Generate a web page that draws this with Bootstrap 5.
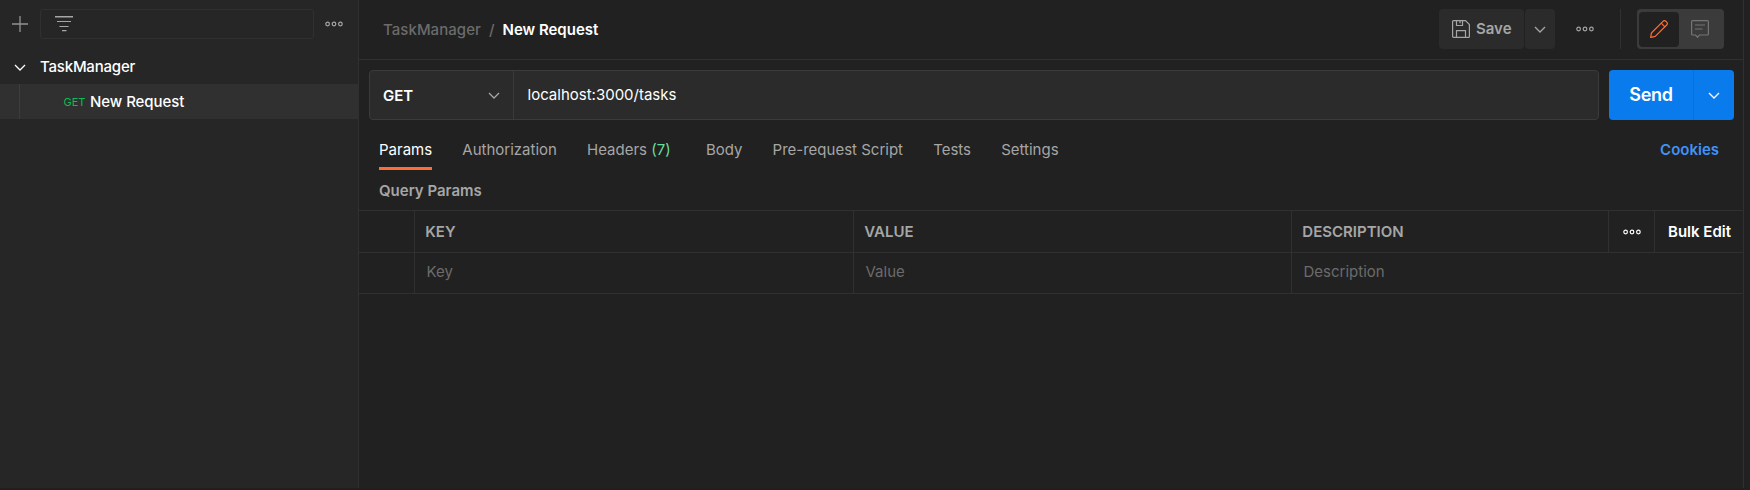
<!DOCTYPE html>
<html lang="en">
<head>
<meta charset="utf-8">
<title>TaskManager / New Request</title>
<link rel="stylesheet" href="https://cdn.jsdelivr.net/npm/bootstrap@5.3.0/dist/css/bootstrap.min.css">
<style>
  body { background: #212121; color: #fff; font-family: Inter, "Liberation Sans", sans-serif; font-size: 15px; line-height: 20px; }
  svg { display: block; flex: none; fill: none; }
  .app { height: 490px; border-bottom: 2px solid #231f20; }
  .side { width: 359px; background: #262626; border-right: 1px solid #303030; font-weight: 500; letter-spacing: -.05px; }
  .side-tools { height: 48px; padding-left: 12px; color: #a6a6a6; }
  .filter { width: 274px; height: 30px; border: 1px solid #303030; border-radius: 3px; padding-left: 14px; margin-left: 12px; margin-right: 11px; }
  .folder { height: 36px; padding-left: 14px; padding-top: 2px; letter-spacing: -.2px; }
  .folder svg { margin-right: 14px; }
  .request { height: 35px; background: #303030; }
  .guide { width: 20px; border-right: 1px solid #3d3d3d; margin-right: 43.5px; }
  .verb { font-size: 11px; font-weight: 400; color: #0cbb52; width: 26.5px; }
  .work { width: 1385px; border-right: 1px solid #303030; }
  .topbar { height: 60px; border-bottom: 1px solid #303030; padding: 0 19px 1px 24px; }
  .trail { padding-top: 2px; }
  .crumb { color: #6b6b6b; font-weight: 500; letter-spacing: .05px; }
  .soft { background: #2b2b2b; color: #a6a6a6; height: 40px; font-weight: 600; border-radius: 4px; }
  .save { width: 85px; padding-left: 13px; margin-right: 1px; }
  .save svg { margin-right: 6px; }
  .caret { width: 30px; }
  .more { margin-left: 21px; color: #a6a6a6; }
  .rule { width: 1px; height: 40px; background: #303030; margin-left: 26px; margin-right: 16px; }
  .modes { width: 87px; height: 40px; background: #3b3b3b; border-radius: 4px; padding: 2px; }
  .mode { width: 40px; height: 35px; border-radius: 4px; }
  .mode.on { background: #212121; margin-right: 1px; }
  .urlrow { padding: 10px 9px 0 10px; }
  .urlbox { width: 1230px; height: 50px; background: #2b2b2b; border: 1px solid #3b3b3b; border-radius: 4px; margin-right: 10px; }
  .method { width: 144px; border-right: 1px solid #3b3b3b; padding: 1px 13px 0; font-weight: 600; }
  .method svg { color: #a6a6a6; }
  .address { padding-left: 13.5px; }
  .send { width: 125px; height: 50px; background: #097bed; border-radius: 4px; font-weight: 600; font-size: 18px; letter-spacing: -.3px; }
  .send-main { width: 85px; border-right: 1px solid #1070d0; }
  .tabs { height: 50px; padding: 0 24px 0 20px; color: #a6a6a6; margin-bottom: 10px; }
  .tab { height: 50px; padding-top: 20px; margin-right: 30.15px; white-space: nowrap; }
  .tab.on { color: #fff; border-bottom: 3px solid #ff6c37; }
  .tab.counted { margin-right: 35.3px; }
  .counted span { color: #6bdd9a; }
  .tabs .cookies { color: #4093f6; font-weight: 600; margin-left: auto; padding-top: 20px; }
  .subtitle { color: #a6a6a6; font-weight: 600; padding-left: 20px; height: 30px; padding-top: 1px; }
  .params { display: grid; grid-template-columns: 55px 439px 438px 317px 46px 1fr; border-top: 1px solid #303030; }
  .params > div { border-bottom: 1px solid #303030; height: 42px; padding-left: 10.3px; display: flex; align-items: center; }
  .params > .edge { border-left: 1px solid #303030; }
  .params > .th { color: #a6a6a6; font-weight: 600; }
  .params > .act { color: #fff; padding-left: 13px; }
  .params > .act.opts { padding-left: 14px; }
  .params > .td { height: 41px; color: #6b6b6b; padding-left: 11.5px; padding-bottom: 2px; }
  .params > .span3 { grid-column: span 3; }
</style>
</head>
<body>
<svg width="0" height="0" class="position-absolute">
  <defs>
    <g id="dots" stroke="currentColor" stroke-width="1.2"><circle cx="2.6" cy="3" r="1.8"/><circle cx="9" cy="3" r="1.8"/><circle cx="15.4" cy="3" r="1.8"/></g>
    <path id="chev" d="M1 1l5 5 5-5" stroke="currentColor" stroke-width="1.3"/>
  </defs>
</svg>
<div class="app d-flex">
  <aside class="side">
    <div class="side-tools d-flex align-items-center">
      <svg width="16" height="16" stroke="#929292" stroke-width="1.3"><path d="M8 0v16M0 8h16"/></svg>
      <div class="filter d-flex align-items-center">
        <svg width="18" height="16"><path fill="#a6a6a6" d="M0 0h18v1.500H0zM2 5h14v1H2zM4.500 10h9v1h-9zM7 14h4.500v1.300H7z"/></svg>
      </div>
      <svg width="18" height="6"><use href="#dots"/></svg>
    </div>
    <div class="folder d-flex align-items-center">
      <svg width="12" height="7"><use href="#chev"/></svg>TaskManager
    </div>
    <div class="request d-flex align-items-center">
      <div class="guide h-100"></div><span class="verb">GET</span><span>New Request</span>
    </div>
  </aside>
  <main class="work">
    <header class="topbar d-flex align-items-center">
      <div class="trail d-flex"><span class="crumb">TaskManager</span><span class="crumb mx-2">/</span><span class="fw-semibold">New Request</span></div>
      <div class="soft save d-flex align-items-center ms-auto">
        <svg width="18" height="18" stroke="#a6a6a6" stroke-width="1.2"><path d="M1.600.6h11.900l3.900 4v11.800a1 1 0 0 1-1 1H1.600a1 1 0 0 1-1-1V1.600a1 1 0 0 1 1-1zM4.500.6v4.900h6V.6M8 1v2.200M4.500 17.500v-6.900h9v6.900"/></svg>Save
      </div>
      <div class="soft caret d-flex align-items-center justify-content-center"><svg width="12" height="7"><use href="#chev"/></svg></div>
      <svg width="18" height="6" class="more"><use href="#dots"/></svg>
      <div class="rule"></div>
      <div class="modes d-flex align-items-center">
        <div class="mode on d-flex align-items-center justify-content-center">
          <svg width="18" height="18" stroke="#ff6c37" stroke-width="1.2" stroke-linejoin="round"><path d="M.7 17.300l.6-3.600a2 2 0 0 1 .6-1.200L13 1.300a2 2 0 0 1 2.800 0l.9.900a2 2 0 0 1 0 2.800L5.500 16.100a2 2 0 0 1-1.200.6zM11.200 3.100l3.700 3.700"/></svg>
        </div>
        <div class="mode d-flex align-items-center justify-content-center">
          <svg width="18" height="18" stroke="#757575" stroke-width="1.2"><path d="M1.600.6h14.800a1 1 0 0 1 1 1v12.400a1 1 0 0 1-1 1H8.500L6.500 17.200 4.500 15H1.600a1 1 0 0 1-1-1V1.600a1 1 0 0 1 1-1zM4 5h10M4 9h7.500"/></svg>
        </div>
      </div>
    </header>
    <div class="urlrow d-flex">
      <div class="urlbox d-flex">
        <div class="method d-flex align-items-center justify-content-between">GET<svg width="12" height="7"><use href="#chev"/></svg></div>
        <div class="address d-flex align-items-center">localhost:3000/tasks</div>
      </div>
      <div class="send d-flex">
        <div class="send-main d-flex align-items-center justify-content-center">Send</div>
        <div class="flex-fill d-flex align-items-center justify-content-center"><svg width="12" height="7"><use href="#chev"/></svg></div>
      </div>
    </div>
    <nav class="tabs d-flex">
      <span class="tab on">Params</span><span class="tab">Authorization</span><span class="tab counted">Headers <span>(7)</span></span><span class="tab">Body</span><span class="tab">Pre-request Script</span><span class="tab">Tests</span><span class="tab">Settings</span>
      <span class="cookies">Cookies</span>
    </nav>
    <div class="subtitle">Query Params</div>
    <div class="params">
      <div class="th"></div><div class="th edge">KEY</div><div class="th edge">VALUE</div><div class="th edge">DESCRIPTION</div>
      <div class="th edge act opts"><svg width="18" height="6"><use href="#dots"/></svg></div>
      <div class="th edge act">Bulk Edit</div>
      <div class="td"></div><div class="td edge">Key</div><div class="td edge">Value</div><div class="td edge span3">Description</div>
    </div>
  </main>
</div>
<script src="https://cdn.jsdelivr.net/npm/bootstrap@5.3.0/dist/js/bootstrap.bundle.min.js"></script>
</body>
</html>
